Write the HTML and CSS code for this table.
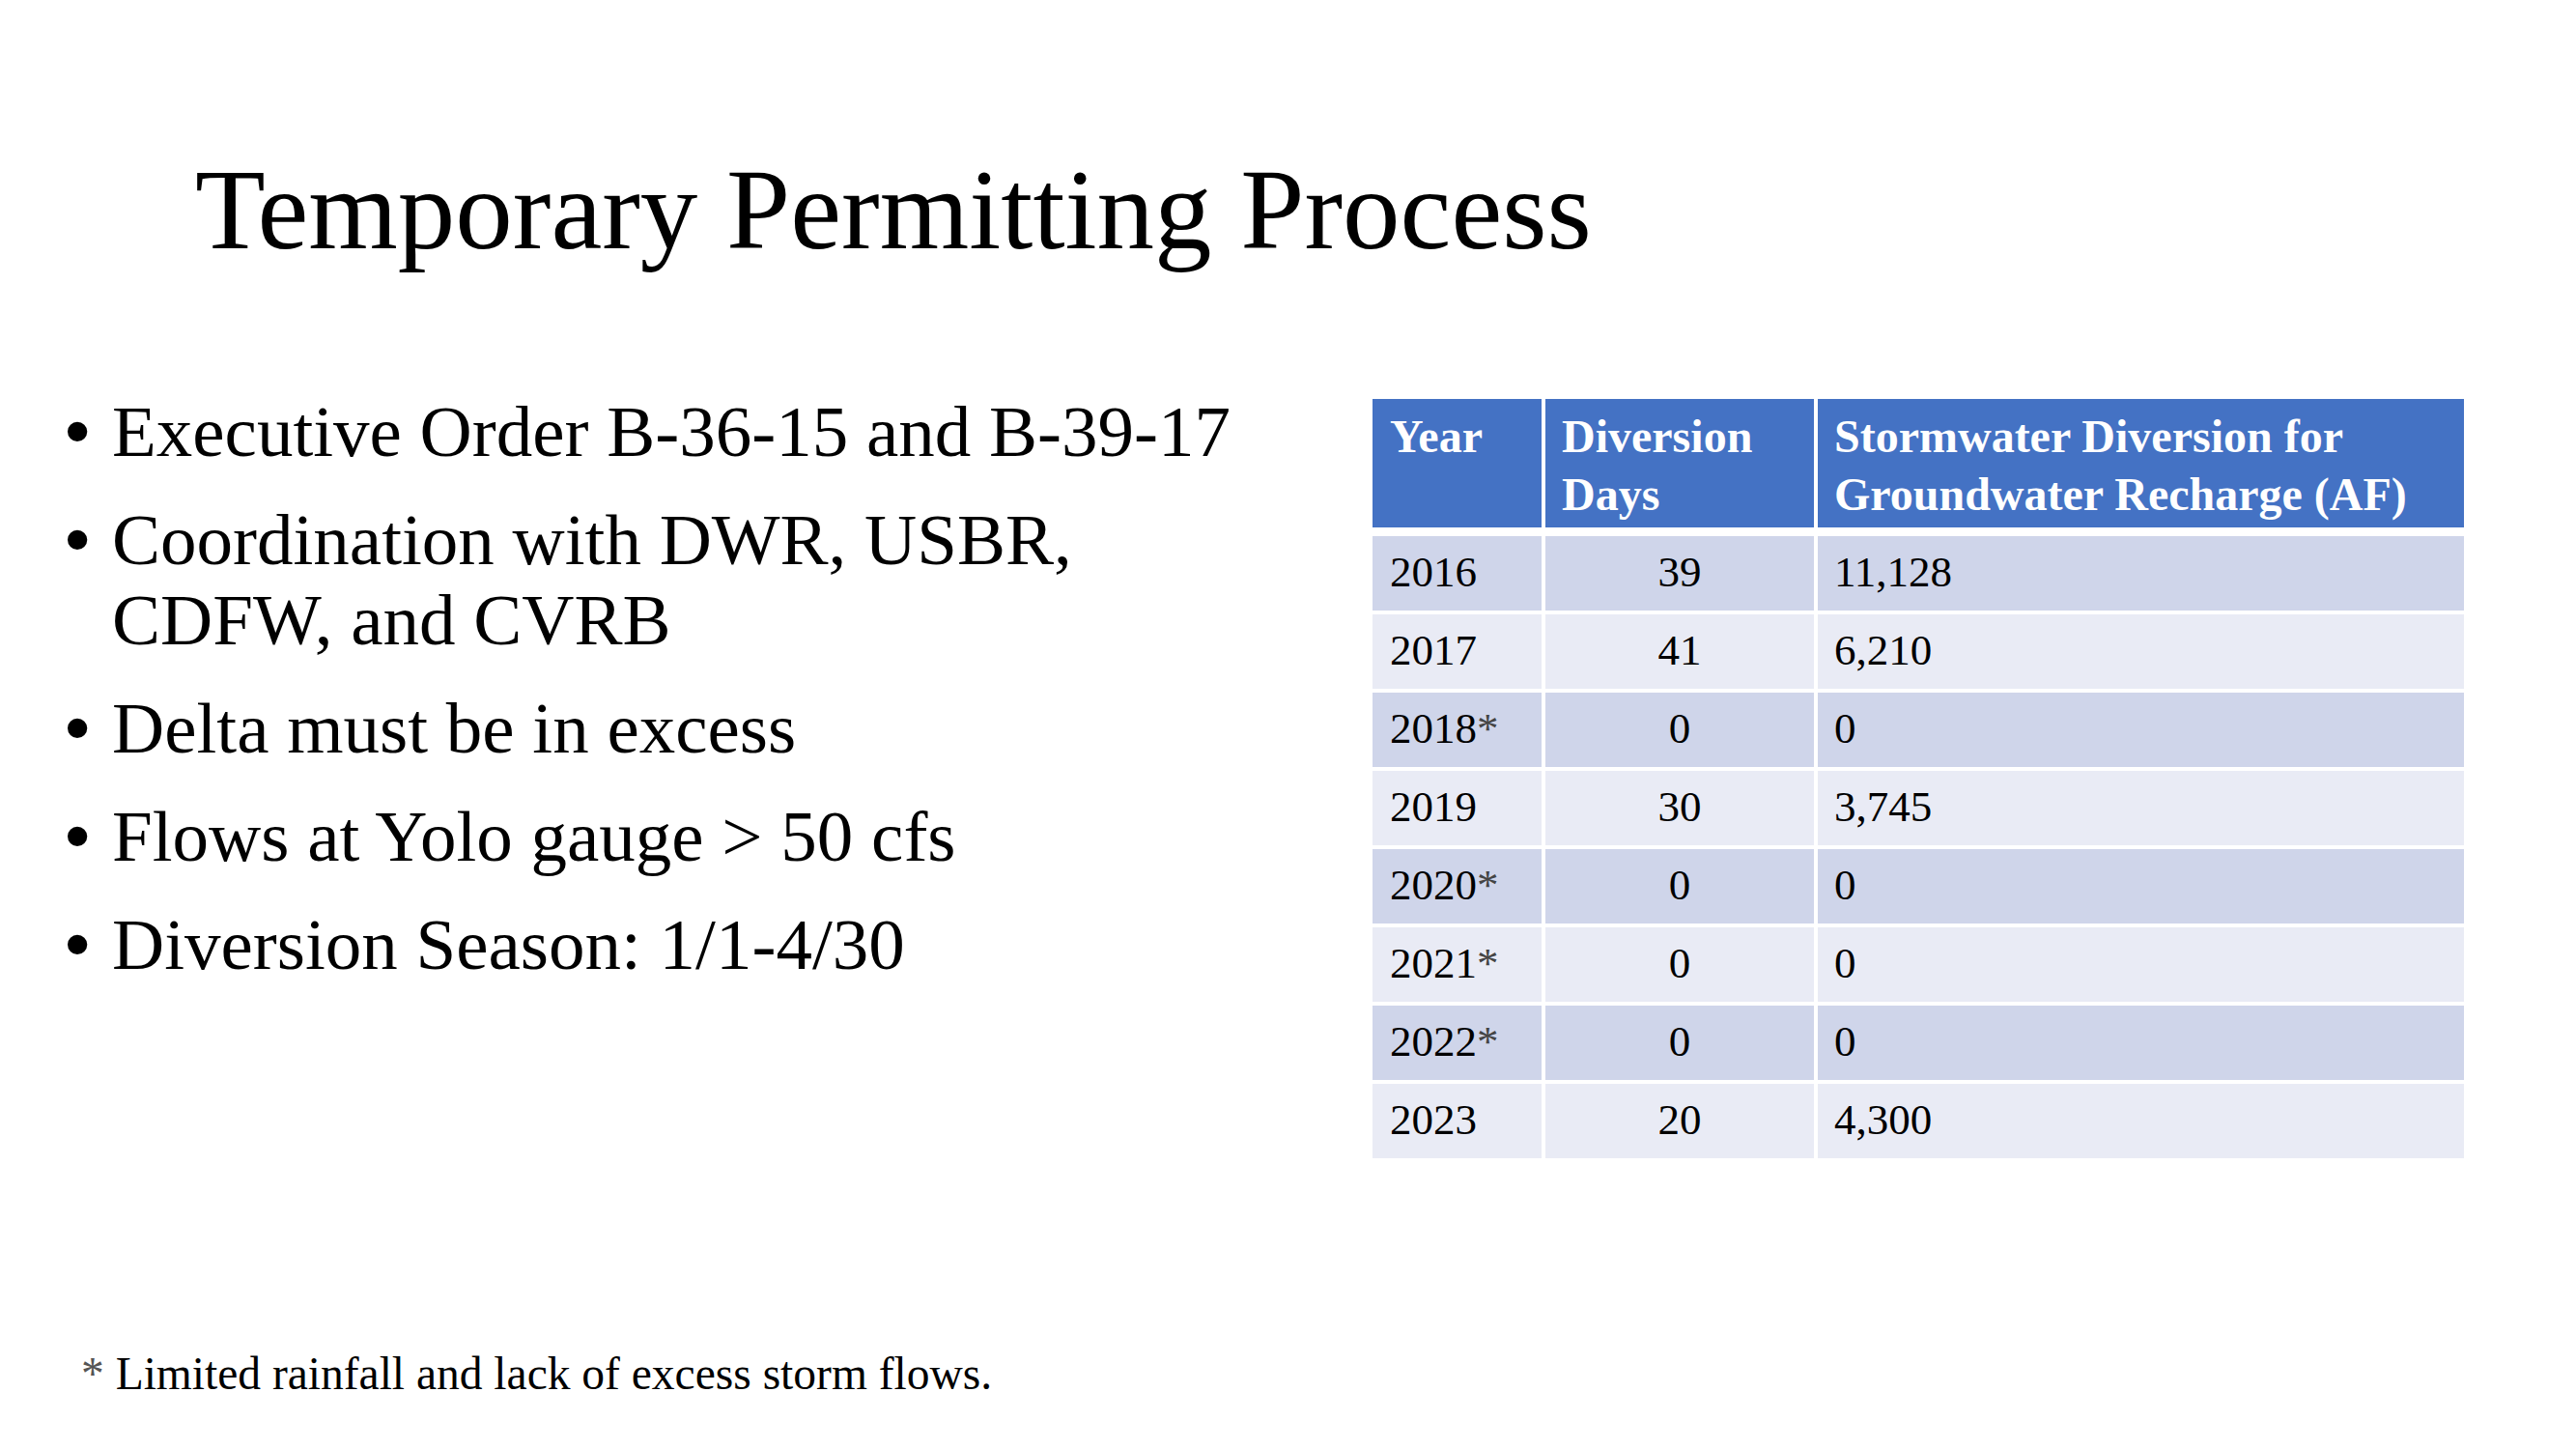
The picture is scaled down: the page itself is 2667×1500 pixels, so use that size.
FILE: index.html
```html
<!DOCTYPE html>
<html lang="en">
<head>
<meta charset="utf-8">
<title>Temporary Permitting Process</title>
<link rel="stylesheet" href="styles.css">
</head>
<body>
<div class="slide">
  <h1 class="title">Temporary Permitting Process</h1>
  <div class="main">
    <ul class="points">
      <li><span class="bullet">•</span><span class="txt">Executive Order B-36-15 and B-39-17</span></li>
      <li><span class="bullet">•</span><span class="txt">Coordination with DWR, USBR, CDFW, and CVRB</span></li>
      <li><span class="bullet">•</span><span class="txt">Delta must be in excess</span></li>
      <li><span class="bullet">•</span><span class="txt">Flows at Yolo gauge &gt; 50 cfs</span></li>
      <li><span class="bullet">•</span><span class="txt">Diversion Season: 1/1-4/30</span></li>
    </ul>
    <table class="data">
      <thead>
        <tr>
          <th class="c1">Year</th>
          <th class="c2">Diversion Days</th>
          <th class="c3">Stormwater Diversion for Groundwater Recharge (AF)</th>
        </tr>
      </thead>
      <tbody>
        <tr class="odd"><td class="c1">2016</td><td class="c2">39</td><td class="c3">11,128</td></tr>
        <tr class="even"><td class="c1">2017</td><td class="c2">41</td><td class="c3">6,210</td></tr>
        <tr class="odd"><td class="c1">2018<span class="ast">*</span></td><td class="c2">0</td><td class="c3">0</td></tr>
        <tr class="even"><td class="c1">2019</td><td class="c2">30</td><td class="c3">3,745</td></tr>
        <tr class="odd"><td class="c1">2020<span class="ast">*</span></td><td class="c2">0</td><td class="c3">0</td></tr>
        <tr class="even"><td class="c1">2021<span class="ast">*</span></td><td class="c2">0</td><td class="c3">0</td></tr>
        <tr class="odd"><td class="c1">2022<span class="ast">*</span></td><td class="c2">0</td><td class="c3">0</td></tr>
        <tr class="even last"><td class="c1">2023</td><td class="c2">20</td><td class="c3">4,300</td></tr>
      </tbody>
    </table>
  </div>
  <p class="footnote"><span class="fn-ast">*</span> Limited rainfall and lack of excess storm flows.</p>
</div>
</body>
</html>
```
FILE: styles.css
```css
html, body {
  margin: 0;
  padding: 0;
  background: #ffffff;
}

.slide {
  width: 2667px;
  height: 1500px;
  box-sizing: border-box;
  padding: 152px 116px 52px 0;
  display: flex;
  flex-direction: column;
  font-family: "Liberation Serif", "Times New Roman", serif;
  color: #000000;
  background: #ffffff;
  overflow: hidden;
}

.title {
  margin: 0;
  padding-left: 202px;
  font-size: 119px;
  line-height: 130px;
  font-weight: normal;
  color: #000000;
}

.main {
  display: flex;
  align-items: flex-start;
  margin-top: 123px;
}

.points {
  list-style: none;
  margin: 0;
  padding: 0 0 0 67px;
  width: 1223px;
  flex: none;
}

.points li {
  display: flex;
  font-size: 75px;
  line-height: 83px;
}

.points li + li {
  margin-top: 29px;
}

.bullet {
  flex: none;
  width: 49px;
  font-family: "Liberation Sans", Arial, sans-serif;
}

.txt {
  flex: 1;
}

.data {
  margin-top: 8px;
  margin-left: auto;
  width: 1130px;
  border-collapse: separate;
  border-spacing: 0;
  table-layout: fixed;
}

.data th,
.data td {
  box-sizing: border-box;
  padding: 0;
  text-align: left;
  vertical-align: top;
}

.data .c1 { width: 179px; border-right: 4px solid #ffffff; padding-left: 18px; }
.data .c2 { width: 282px; border-right: 4px solid #ffffff; }
.data .c3 { width: 669px; padding-left: 17px; }

.data th {
  background: #4472c4;
  color: #ffffff;
  font-weight: bold;
  font-size: 48px;
  line-height: 60px;
  height: 142px;
  padding-top: 9px;
  padding-bottom: 4px;
  border-bottom: 9px solid #ffffff;
}

.data th.c2 {
  padding-left: 17px;
  padding-right: 12px;
}

.data td {
  font-size: 45px;
  line-height: 60px;
  height: 81px;
  padding-top: 7px;
  padding-bottom: 10px;
  border-bottom: 4px solid #ffffff;
}

.data tr.last td {
  height: 77px;
  border-bottom: none;
}

.data td.c2 {
  text-align: center;
}

.data tr.odd td { background: #cfd5ea; }
.data tr.even td { background: #e9ebf5; }

.ast {
  color: #444444;
}

.footnote {
  margin: auto 0 0 0;
  padding-left: 84px;
  font-size: 47.5px;
  line-height: 52px;
  color: #000000;
}

.fn-ast {
  color: #555555;
}
```
